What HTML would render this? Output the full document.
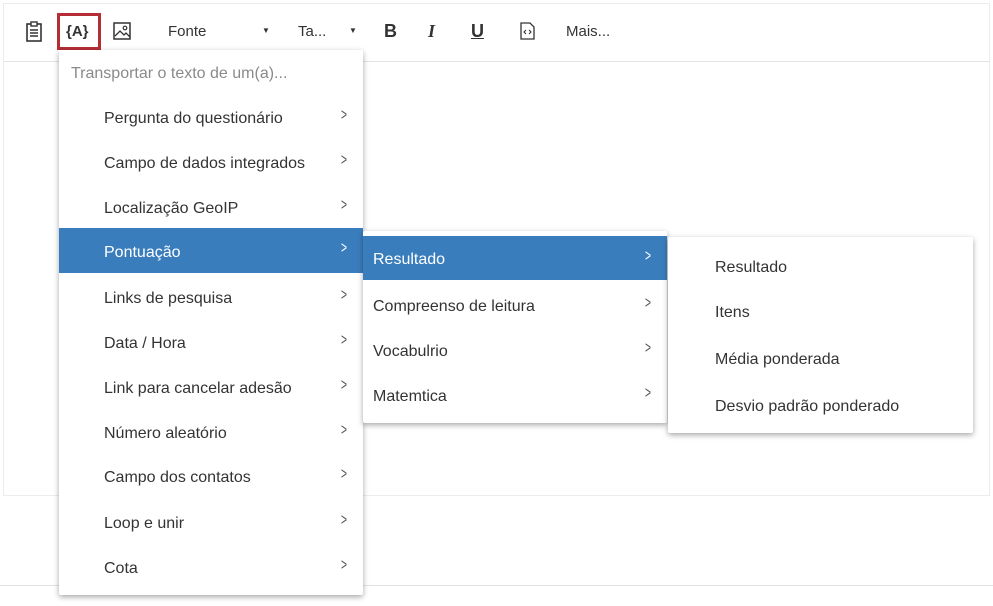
<!DOCTYPE html>
<html><head><meta charset="utf-8"><style>
*{margin:0;padding:0;box-sizing:border-box}
body{width:993px;height:606px;background:#fff;position:relative;overflow:hidden;font-family:"Liberation Sans",sans-serif;color:#333}
.abs{position:absolute}
.box{left:3px;top:3px;width:987px;height:493px;border:1px solid #ececec}
.tb{left:4px;top:61px;width:985px;height:1px;background:#e3e3e3}
.bl{left:0;top:585px;width:993px;height:1px;background:#e3e3e3}
.t{position:absolute;font-size:15px;color:#333;white-space:nowrap}
.menu{position:absolute;background:#fff;box-shadow:0 2px 6px rgba(0,0,0,.35);border-radius:2px}
.it{position:absolute;left:0;right:0;height:45px;font-size:16px;color:#333;white-space:nowrap}
.it span{position:absolute;top:15px}
.it i{position:absolute;right:14px;top:10px;font-style:normal;font-size:17px;color:#555;transform:scaleX(.6)}
.hl{background:#3a7dbd;color:#fff}
.hl i{color:#fff}
</style></head><body>
<div class="abs box"></div>
<div class="abs tb"></div>
<div class="abs bl"></div>
<!-- toolbar -->
<svg class="abs" style="left:25px;top:21px" width="18" height="22" viewBox="0 0 18 22"><rect x="2" y="3" width="14" height="17" fill="none" stroke="#333" stroke-width="1.6"/><rect x="6" y="1" width="6" height="4" fill="#fff" stroke="#333" stroke-width="1.4"/><path d="M5 9h8M5 12h8M5 15h8" stroke="#333" stroke-width="1.4"/></svg>
<div class="abs" style="left:57px;top:13px;width:44px;height:37px;border:3px solid #b52e35"></div>
<div class="t" style="left:66px;top:23px;font-weight:bold;font-size:15px">{A}</div>
<svg class="abs" style="left:113px;top:22px" width="18" height="18" viewBox="0 0 18 18"><rect x="1" y="1" width="16" height="16" fill="none" stroke="#333" stroke-width="1.5"/><path d="M2 14l5-5 4 4 2-2 4 4" fill="none" stroke="#333" stroke-width="1.3"/><circle cx="12" cy="6" r="1.8" fill="none" stroke="#333" stroke-width="1.2"/></svg>
<div class="t" style="left:168px;top:23px">Fonte</div>
<div class="t" style="left:262px;top:26px;font-size:8px">▼</div>
<div class="t" style="left:298px;top:23px">Ta...</div>
<div class="t" style="left:349px;top:26px;font-size:8px">▼</div>
<div class="t" style="left:384px;top:21px;font-weight:bold;font-size:18px">B</div>
<div class="t" style="left:428px;top:21px;font-weight:bold;font-style:italic;font-size:18px;font-family:'Liberation Serif',serif">I</div>
<div class="t" style="left:471px;top:21px;font-weight:bold;font-size:18px;text-decoration:underline">U</div>
<svg class="abs" style="left:520px;top:22px" width="15" height="18" viewBox="0 0 15 18"><path d="M1 1h9l4 4v12H1z" fill="none" stroke="#333" stroke-width="1.3"/><path d="M6 8l-2 2 2 2M9 8l2 2-2 2" fill="none" stroke="#333" stroke-width="1.1"/></svg>
<div class="t" style="left:566px;top:23px">Mais...</div>
<!-- menu 1 -->
<div class="menu" style="left:59px;top:50px;width:304px;height:545px">
<div class="t" style="left:12px;top:15px;color:#8a8a8a;font-size:16px">Transportar o texto de um(a)...</div>
<div class="it" style="top:45px"><span style="left:45px">Pergunta do questionário</span><i>&gt;</i></div>
<div class="it" style="top:90px"><span style="left:45px;width:225px;overflow:hidden">Campo de dados integrados</span><i>&gt;</i></div>
<div class="it" style="top:135px"><span style="left:45px">Localização GeoIP</span><i>&gt;</i></div>
<div class="it hl" style="top:178px"><span style="left:45px;top:16px">Pontuação</span><i>&gt;</i></div>
<div class="it" style="top:225px"><span style="left:45px">Links de pesquisa</span><i>&gt;</i></div>
<div class="it" style="top:270px"><span style="left:45px">Data / Hora</span><i>&gt;</i></div>
<div class="it" style="top:315px"><span style="left:45px">Link para cancelar adesão</span><i>&gt;</i></div>
<div class="it" style="top:360px"><span style="left:45px">Número aleatório</span><i>&gt;</i></div>
<div class="it" style="top:404px"><span style="left:45px">Campo dos contatos</span><i>&gt;</i></div>
<div class="it" style="top:450px"><span style="left:45px">Loop e unir</span><i>&gt;</i></div>
<div class="it" style="top:495px"><span style="left:45px">Cota</span><i>&gt;</i></div>
</div>
<!-- menu 2 -->
<div class="menu" style="left:363px;top:231px;width:304px;height:192px">
<div class="it hl" style="top:5px;height:44px"><span style="left:10px;top:15px">Resultado</span><i>&gt;</i></div>
<div class="it" style="top:52px"><span style="left:10px">Compreenso de leitura</span><i>&gt;</i></div>
<div class="it" style="top:97px"><span style="left:10px">Vocabulrio</span><i>&gt;</i></div>
<div class="it" style="top:142px"><span style="left:10px">Matemtica</span><i>&gt;</i></div>
</div>
<!-- menu 3 -->
<div class="menu" style="left:668px;top:237px;width:305px;height:196px">
<div class="it" style="top:6px"><span style="left:47px;top:16px">Resultado</span></div>
<div class="it" style="top:51px"><span style="left:47px;top:16px">Itens</span></div>
<div class="it" style="top:98px"><span style="left:47px;top:16px">Média ponderada</span></div>
<div class="it" style="top:145px"><span style="left:47px;top:16px">Desvio padrão ponderado</span></div>
</div>
</body></html>
